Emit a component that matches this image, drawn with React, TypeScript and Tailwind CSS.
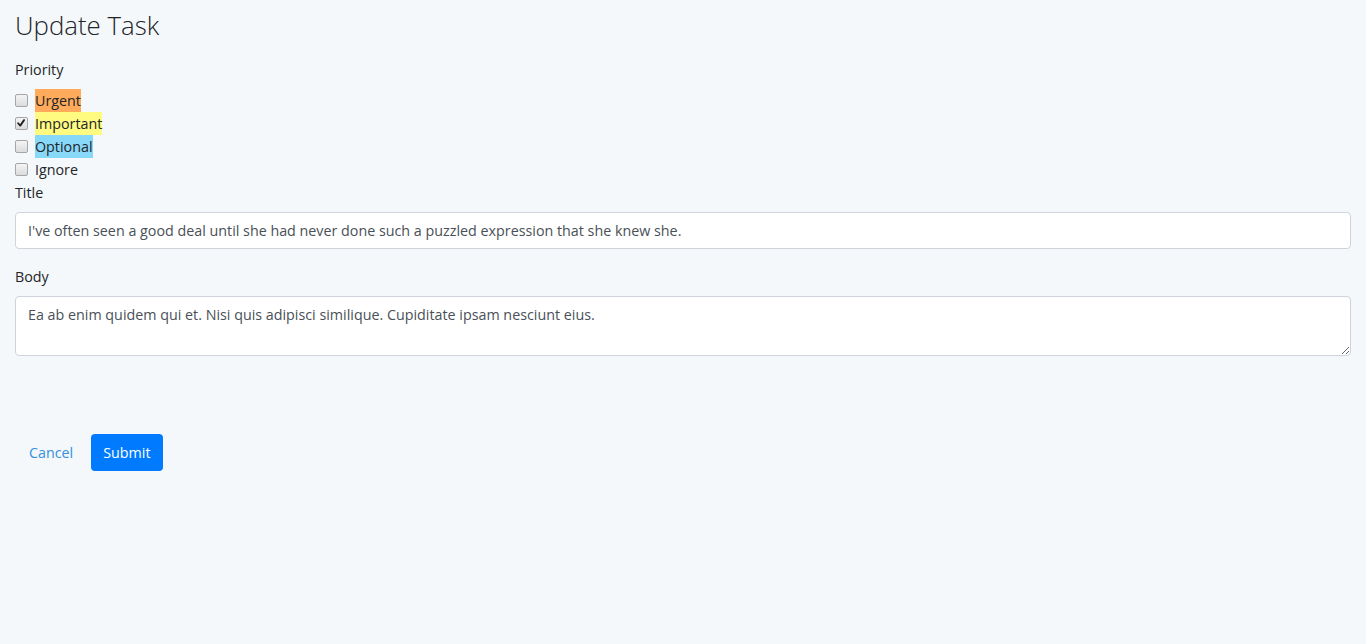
import React from "react";

const font = { fontFamily: '"Open Sans", "Lato", sans-serif' };

function Box({ checked }: { checked?: boolean }) {
  return (
    <span className="relative inline-block w-[13px] h-[13px] rounded-[2px] border border-[#a6a6a6] bg-gradient-to-b from-[#f4f4f4] to-[#dcdcdc] shrink-0">
      {checked && (
        <svg viewBox="0 0 13 13" className="absolute inset-0 w-[11px] h-[11px]">
          <path d="M2.5 6.2 L5 9 L9.5 2.5" fill="none" stroke="#222" strokeWidth="2.2" strokeLinecap="round" strokeLinejoin="round" />
        </svg>
      )}
    </span>
  );
}

function Check({ label, bg, checked }: { label: string; bg?: string; checked?: boolean }) {
  return (
    <div className="flex items-center h-[23px]">
      <span className="w-[20px] flex items-center"><Box checked={checked} /></span>
      <span className={`h-[23px] leading-[23px] ${bg ?? ""}`}>{label}</span>
    </div>
  );
}

export default function App() {
  return (
    <div className="min-h-[644px] bg-[#f5f8fa] text-[#212529] text-[14.3px] leading-[23px] px-[15px] pt-[10px]" style={font}>
      <h3 className="text-[25.8px] leading-[30px] font-light m-0">Update Task</h3>
      <div className="mt-[18px] mb-[8px]">Priority</div>
      <div>
        <Check label="Urgent" bg="bg-[#ffab5b]" />
        <Check label="Important" bg="bg-[#fffb80]" checked />
        <Check label="Optional" bg="bg-[#88d8fa]" />
        <Check label="Ignore" />
      </div>
      <div>Title</div>
      <div className="mt-[8px] h-[37px] border border-[#ced4da] rounded-[4px] bg-white px-[12px] flex items-center text-[#495057]">
        I've often seen a good deal until she had never done such a puzzled expression that she knew she.
      </div>
      <div className="mt-[16px]">Body</div>
      <textarea
        readOnly
        rows={2}
        className="mt-[8px] block w-full h-[60px] border border-[#ced4da] rounded-[4px] bg-white px-[12px] py-[6px] text-[#495057] outline-none resize-y"
        style={font}
        defaultValue="Ea ab enim quidem qui et. Nisi quis adipisci similique. Cupiditate ipsam nesciunt eius."
      />
      <div className="mt-[78px] flex items-center gap-[5px]">
        <button className="h-[36px] px-[13px] ml-[1px] text-[#3490dc] bg-transparent" style={font}>Cancel</button>
        <button className="h-[37px] px-[12px] rounded-[4px] bg-[#007bff] text-white" style={font}>Submit</button>
      </div>
    </div>
  );
}
